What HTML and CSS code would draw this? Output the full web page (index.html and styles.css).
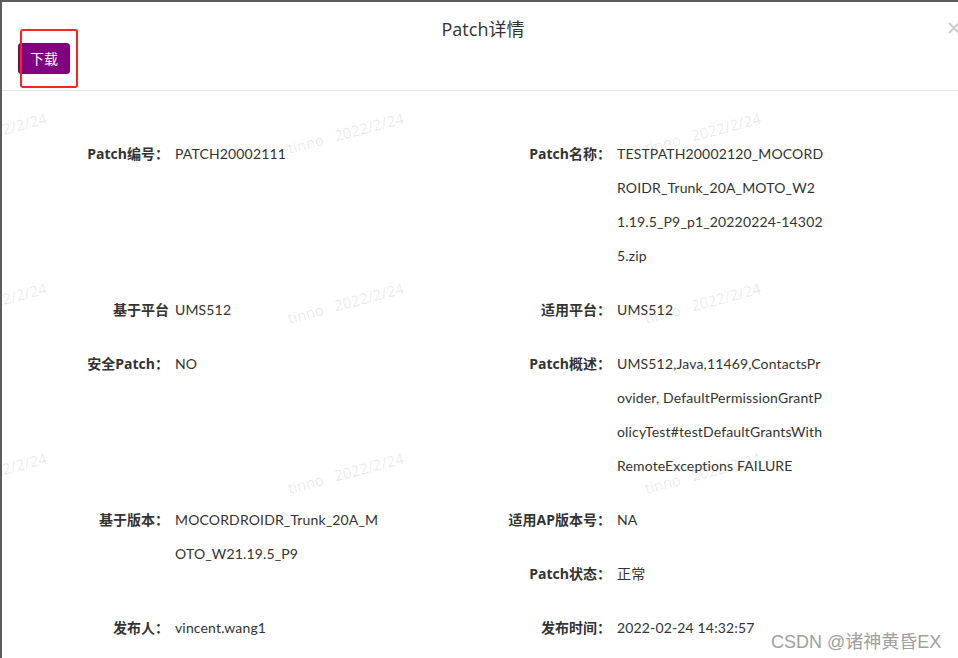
FILE: index.html
```html
<!DOCTYPE html>
<html lang="zh-CN">
<head>
<meta charset="utf-8">
<title>Patch详情</title>
<link rel="stylesheet" href="styles.css">
</head>
<body>
<div class="modal">
  <div class="modal-header">
    <h4 class="modal-title">Patch详情</h4>
    <div class="toolbar">
      <button class="btn-download" type="button">下载</button>
    </div>
    <span class="annotation"></span>
    <svg class="close" width="14" height="14" viewBox="0 0 14 14"><path d="M2 2 L12 12 M12 2 L2 12" stroke="#cfcfcf" stroke-width="2.2" fill="none"/></svg>
  </div>
  <div class="modal-body">
    <div class="detail-grid">
      <div class="field"><span class="label">Patch编号：</span><span class="value">PATCH20002111</span></div>
      <div class="field"><span class="label">Patch名称：</span><span class="value">TESTPATH20002120_MOCORDROIDR_Trunk_20A_MOTO_W21.19.5_P9_p1_20220224-143025.zip</span></div>
      <div class="field"><span class="label">基于平台</span><span class="value">UMS512</span></div>
      <div class="field"><span class="label">适用平台：</span><span class="value">UMS512</span></div>
      <div class="field"><span class="label">安全Patch：</span><span class="value">NO</span></div>
      <div class="field"><span class="label">Patch概述：</span><span class="value">UMS512,Java,11469,ContactsProvider, DefaultPermissionGrantPolicyTest#testDefaultGrantsWithRemoteExceptions FAILURE</span></div>
      <div class="field"><span class="label">基于版本：</span><span class="value">MOCORDROIDR_Trunk_20A_MOTO_W21.19.5_P9</span></div>
      <div class="stack">
        <div class="field"><span class="label">适用AP版本号：</span><span class="value">NA</span></div>
        <div class="field"><span class="label">Patch状态：</span><span class="value">正常</span></div>
      </div>
      <div class="field"><span class="label">发布人：</span><span class="value">vincent.wang1</span></div>
      <div class="field"><span class="label">发布时间：</span><span class="value">2022-02-24 14:32:57</span></div>
    </div>
  </div>
  <div class="watermark">
    <span class="wm">tinno&nbsp;&nbsp;&nbsp;2022/2/24</span><span class="wm">tinno&nbsp;&nbsp;&nbsp;2022/2/24</span><span class="wm">tinno&nbsp;&nbsp;&nbsp;2022/2/24</span>
    <span class="wm">tinno&nbsp;&nbsp;&nbsp;2022/2/24</span><span class="wm">tinno&nbsp;&nbsp;&nbsp;2022/2/24</span><span class="wm">tinno&nbsp;&nbsp;&nbsp;2022/2/24</span>
    <span class="wm">tinno&nbsp;&nbsp;&nbsp;2022/2/24</span><span class="wm">tinno&nbsp;&nbsp;&nbsp;2022/2/24</span><span class="wm">tinno&nbsp;&nbsp;&nbsp;2022/2/24</span>
    <span class="wm">tinno&nbsp;&nbsp;&nbsp;2022/2/24</span><span class="wm">tinno&nbsp;&nbsp;&nbsp;2022/2/24</span><span class="wm">tinno&nbsp;&nbsp;&nbsp;2022/2/24</span>
  </div>
  <div class="csdn">CSDN @诸神黄昏EX</div>
</div>
</body>
</html>
```
FILE: styles.css
```css
html, body {
  margin: 0;
  padding: 0;
  background: #ffffff;
  overflow: hidden;
  width: 958px;
  height: 658px;
}

body {
  font-family: "Open Sans", "Noto Sans CJK SC", sans-serif;
  color: #333333;
  font-size: 14px;
}

.modal {
  position: relative;
  width: 964px;
  height: 658px;
  overflow: hidden;
  box-sizing: border-box;
  border-top: 2px solid #5c5c5c;
  border-left: 2px solid #5c5c5c;
  background: #ffffff;
}

.modal-header {
  position: relative;
  padding: 15px 16px 16px 16px;
  border-bottom: 1px solid #e5e5e5;
}

.modal-title {
  margin: 0;
  text-align: center;
  font-size: 18px;
  font-weight: normal;
  line-height: 24px;
  color: #333333;
}

.toolbar {
  margin-top: 2px;
  display: flex;
}

.btn-download {
  height: 31px;
  padding: 0 11px;
  border: 1px solid #6d0a6d;
  border-radius: 3px;
  background: #800080;
  color: #ffffff;
  font-family: "Noto Sans CJK SC", sans-serif;
  font-size: 14px;
  line-height: 29px;
}

.annotation {
  position: absolute;
  left: 18px;
  top: 27px;
  width: 54px;
  height: 55px;
  border: 2px solid #ff2222;
  border-radius: 3px;
}

.close {
  position: absolute;
  left: 945px;
  top: 19px;
}

.modal-body {
  padding: 46px 0 0 18px;
}

.detail-grid {
  display: grid;
  grid-template-columns: 442px 442px;
  row-gap: 20px;
  align-items: start;
}

.stack {
  display: flex;
  flex-direction: column;
  gap: 20px;
}

.field {
  display: flex;
  align-items: flex-start;
  line-height: 34px;
}

.label {
  width: 149px;
  flex: none;
  text-align: right;
  font-weight: bold;
  color: #333333;
}

.value {
  width: 206.5px;
  margin-left: 6px;
  font-family: "Lato", "Noto Sans CJK SC", sans-serif;
  word-break: break-all;
  letter-spacing: 0.15px;
  color: #333333;
}

.watermark {
  position: absolute;
  left: -69px;
  top: -31px;
  display: grid;
  grid-template-columns: repeat(3, 357px);
  grid-auto-rows: 170px;
  pointer-events: none;
}

.wm {
  display: block;
  align-self: start;
  justify-self: start;
  font-family: "Open Sans", sans-serif;
  font-size: 15px;
  line-height: 15px;
  white-space: nowrap;
  color: rgba(0, 0, 0, 0.1);
  transform: rotate(-15deg);
  transform-origin: 0 100%;
}

.csdn {
  position: absolute;
  left: 769px;
  top: 625px;
  font-family: "Liberation Sans", "Noto Sans CJK SC", sans-serif;
  font-size: 18px;
  color: #a0a0a0;
  white-space: nowrap;
  text-shadow: 0 0 2px #ffffff;
}
```
